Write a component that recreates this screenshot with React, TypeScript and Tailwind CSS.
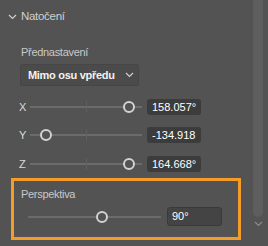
import React from "react";

function Chevron({ className }: { className?: string }) {
  return (
    <svg className={className} width="9" height="6" viewBox="0 0 9 6" fill="none">
      <path d="M1 1 L4.5 4.5 L8 1" stroke="currentColor" strokeWidth="1.2" />
    </svg>
  );
}

function Slider({
  label,
  pos,
  value,
  trackW,
}: {
  label: string;
  pos: number;
  value: string;
  trackW: number;
}) {
  return (
    <div className="flex items-center h-[16px] pl-[19px]">
      <div className="w-[11px] text-[11px] leading-none text-[#dadada]">{label}</div>
      <div className="relative h-[16px]" style={{ width: trackW }}>
        <div className="absolute left-0 right-0 top-[7px] h-[2px] bg-[#6b6b6b]" />
        <div className="absolute left-1/2 top-[2px] w-px h-[12px] bg-[#5f5f5f]" />
        <div
          className="absolute top-[2px] w-[12px] h-[12px] rounded-full border-2 border-[#d2d2d2] bg-[#535353]"
          style={{ left: pos - 6 }}
        />
      </div>
      <div className="ml-[5px] w-[54px] h-[16px] rounded-[3px] bg-[#3c3c3c] flex items-center pl-[5px] text-[11px] text-white leading-none whitespace-nowrap">
        {value}
      </div>
    </div>
  );
}

export default function App() {
  return (
    <div className="w-[268px] h-[246px] bg-[#535353] flex font-['Liberation_Sans',sans-serif] overflow-hidden">
      <div className="w-[253px] flex flex-col">
        <div className="mt-[10px] h-[14px] flex items-center pl-[8px] text-[#cfcfcf]">
          <Chevron />
          <span className="ml-[4px] text-[11.5px] tracking-[-0.3px] leading-none">Natočení</span>
        </div>
        <div className="mt-[21px] h-[14px] pl-[21px] flex items-center text-[11px] tracking-[-0.3px] text-[#c8c8c8] leading-none">
          Přednastavení
        </div>
        <div className="mt-[5px] ml-[20px] w-[119px] h-[22px] bg-[#4b4b4b] border border-[#464646] rounded-[2px] flex items-center pl-[7px] pr-[4px] text-[#f2f2f2]">
          <span className="text-[11px] tracking-[-0.3px] font-bold leading-none flex-1 whitespace-nowrap">Mimo osu vpředu</span>
          <Chevron className="text-[#d0d0d0]" />
        </div>
        <div className="mt-[13px]">
          <Slider label="X" pos={99} value="158.057°" trackW={112} />
        </div>
        <div className="mt-[12px]">
          <Slider label="Y" pos={16} value="-134.918" trackW={112} />
        </div>
        <div className="mt-[13px]">
          <Slider label="Z" pos={99} value="164.668°" trackW={112} />
        </div>
        <div className="mt-[6px] ml-[11px] w-[230px] h-[62px] border-[3px] border-[#f39c28] pt-[6px]">
          <div className="h-[14px] pl-[7px] flex items-center text-[11px] tracking-[-0.3px] text-[#c8c8c8] leading-none">
            Perspektiva
          </div>
          <div className="mt-[6px] flex items-center h-[19px] pl-[14px]">
            <div className="relative w-[133px] h-[19px]">
              <div className="absolute left-0 right-0 top-[9px] h-[2px] bg-[#6b6b6b]" />
              <div className="absolute top-[4px] left-[68px] w-[12px] h-[12px] rounded-full border-2 border-[#d2d2d2] bg-[#535353]" />
            </div>
            <div className="ml-[6px] w-[55px] h-[19px] rounded-[3px] bg-[#444444] border border-[#3a3a3a] flex items-center pl-[4px] text-[11px] text-white leading-none">
              90°
            </div>
          </div>
        </div>
      </div>
      <div className="w-[10px] flex flex-col items-center">
        <div className="w-[10px] h-[217px] bg-[#5e5e5e] rounded-b-[5px]" />
        <Chevron className="mt-[4px] text-[#8a8a8a]" />
      </div>
    </div>
  );
}
